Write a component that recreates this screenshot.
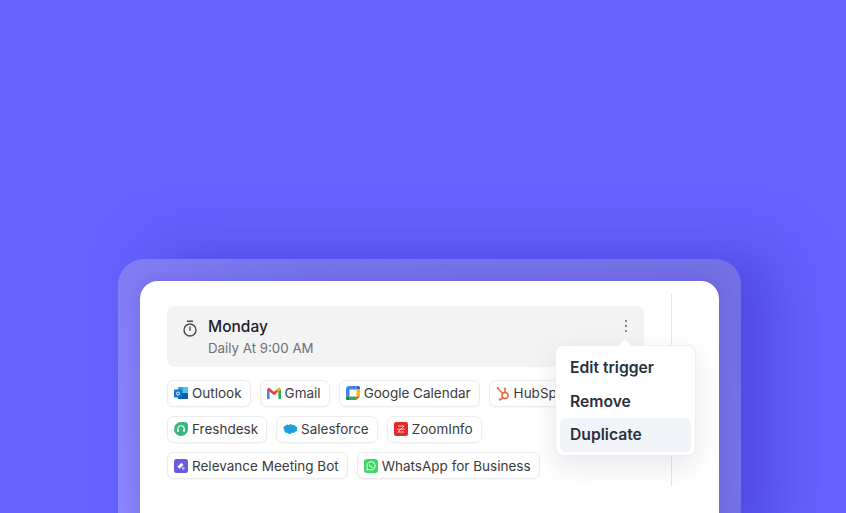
<script>
</script>

<div class="page">
  <div class="shell">
    <div class="card">
      <div class="main">
        <div class="trigger">
          <svg class="timer" viewBox="0 0 16 18" width="16" height="18" fill="none" stroke="#4a4a4a" stroke-width="1.4" stroke-linecap="round">
            <path d="M5.400 1.200h5.200" />
            <circle cx="8" cy="10" r="6" />
            <path d="M8 7v3.200" />
          </svg>
          <div class="titles">
            <div class="title">Monday</div>
            <div class="sub">Daily At 9:00 AM</div>
          </div>
          <svg class="dots" viewBox="0 0 4 14" width="4" height="14" fill="#555">
            <circle cx="2" cy="2" r=".9" /><circle cx="2" cy="7" r=".9" /><circle cx="2" cy="12" r=".9" />
          </svg>
        </div>
        <div class="chips">
          <div class="chip">
            <svg viewBox="0 0 14 14" width="14" height="14">
              <rect x="4" y="1" width="10" height="12" rx="1" fill="#28a8ea" />
              <rect x="9" y="1" width="5" height="6" rx=".6" fill="#4fc3f7" />
              <rect x="4" y="7" width="10" height="6" rx="1" fill="#0a5ea8" />
              <rect x="0" y="3.500" width="8" height="8" rx="1" fill="#1477d0" />
              <circle cx="4" cy="7.500" r="1.500" fill="none" stroke="#fff" stroke-width=".9" />
            </svg>Outlook
          </div>
          <div class="chip">
            <svg viewBox="0 0 14 12" width="14" height="12" fill="none">
              <path d="M1.300 12V2.500" stroke="#4285f4" stroke-width="2.600" />
              <path d="M12.700 12V2.500" stroke="#34a853" stroke-width="2.600" />
              <path d="M1 1.500 7 6.500l6-5" stroke="#ea4335" stroke-width="2.600" />
              <path d="M13 1.500 10.300 3.800" stroke="#fbbc04" stroke-width="2.600" />
            </svg>Gmail
          </div>
          <div class="chip">
            <svg viewBox="0 0 14 14" width="14" height="14" fill="none">
              <path d="M3.500 0H10.500V3.500H3.500V10.500H0V3.500A3.500 3.500 0 0 1 3.500 0z" fill="#3f7ff0" />
              <path d="M10.500 0H12.500A1.500 1.500 0 0 1 14 1.500V3.500H10.500z" fill="#2a62d4" />
              <path d="M10.500 3.500H14V10.500H10.500z" fill="#fbbc04" />
              <path d="M3.500 10.500H10.500V14H3.500z" fill="#34a853" />
              <path d="M0 10.500H3.500V14H1.500A1.500 1.500 0 0 1 0 12.500z" fill="#188038" />
              <path d="M10.500 10.500H14L10.500 14z" fill="#ea4335" />
            </svg>Google Calendar
          </div>
          <div class="chip">
            <svg viewBox="0 0 14 15" width="14" height="15" fill="none" stroke="#f0643c" stroke-width="1.500" stroke-linecap="round">
              <circle cx="9" cy="9.600" r="3" />
              <path d="M9 6.600V3.400M6.700 7.600 2.400 3M6.800 11.600l-2.400 2" />
              <circle cx="9" cy="2.600" r="1" fill="#f0643c" stroke="none" />
              <circle cx="1.800" cy="2.200" r="1.100" fill="#f0643c" stroke="none" />
              <circle cx="3.800" cy="13.600" r="1" fill="#f0643c" stroke="none" />
            </svg>HubSpot
          </div>
          <div class="chip">
            <svg viewBox="0 0 14 14" width="14" height="14" fill="none">
              <path d="M7 0h3.500A3.500 3.500 0 0 1 14 3.500V7a7 7 0 0 1-7 7 7 7 0 0 1-7-7 7 7 0 0 1 7-7z" fill="#3bb87f" />
              <path d="M3.800 8.400V7a3.200 3.200 0 0 1 6.400 0v1.400" stroke="#fff" stroke-width="1.100" />
              <rect x="3.200" y="7.200" width="1.600" height="2.600" rx=".6" fill="#fff" />
              <rect x="9.200" y="7.200" width="1.600" height="2.600" rx=".6" fill="#fff" />
            </svg>Freshdesk
          </div>
          <div class="chip">
            <svg viewBox="0 0 14 10" width="14" height="10">
              <path d="M5.800 1.200A2.500 2.500 0 0 1 9.700 1a3 3 0 0 1 3 1.200A2.900 2.900 0 0 1 12 7.800a2.200 2.200 0 0 1-3 .8 2.500 2.500 0 0 1-4.500.1A2.200 2.200 0 0 1 1.500 6 2.400 2.400 0 0 1 2.500 1.700a2.300 2.300 0 0 1 3.300-.5z" fill="#1ea1db" />
            </svg>Salesforce
          </div>
          <div class="chip">
            <svg viewBox="0 0 14 14" width="14" height="14" fill="none">
              <rect width="14" height="14" rx="2" fill="#e32b2b" />
              <path d="M4 4h6L4 10h6M3 7.200h8" stroke="#fff" stroke-width=".9" opacity=".85" />
            </svg>ZoomInfo
          </div>
          <div class="chip">
            <svg viewBox="0 0 14 14" width="14" height="14">
              <rect width="14" height="14" rx="2.500" fill="#6a5ae0" />
              <path d="M3.500 7.500 7.500 3.800 9.500 6 5.500 9.800z" fill="#fff" />
              <path d="M8 8.200h2.500v2.300H8z" fill="#c9c2f7" />
            </svg>Relevance Meeting Bot
          </div>
          <div class="chip">
            <svg viewBox="0 0 14 14" width="14" height="14" fill="none">
              <rect width="14" height="14" rx="3" fill="#3ed768" />
              <path d="M2.800 11.200l.7-2.400A4.100 4.100 0 1 1 5.200 10.500z" stroke="#fff" stroke-width="1" />
              <path d="M5.400 4.900c-.7.900 0 2 .9 2.900s2 1.400 2.700.8l-.8-1-.7.3-1.300-1.300.3-.7z" fill="#fff" />
            </svg>WhatsApp for Business
          </div>
        </div>
      </div>
      <div class="side"></div>
      <div class="menu">
        <div class="arrow"></div>
        <div class="item">Edit trigger</div>
        <div class="item">Remove</div>
        <div class="item active">Duplicate</div>
      </div>
    </div>
  </div>
</div>

<style>
  :global(body) {
    margin: 0;
    background: #6563ff;
  }
  .page {
    box-sizing: border-box;
    width: 846px;
    height: 513px;
    overflow: hidden;
    padding: 259px 0 0 118px;
    font-family: Inter, "Liberation Sans", sans-serif;
  }
  .shell {
    box-sizing: border-box;
    width: 623px;
    height: 300px;
    padding: 22px;
    border-radius: 26px;
    background: linear-gradient(60deg, #8a86ff 0%, #7773ea 45%, #736fe4 100%);
    box-shadow: 35px -8px 55px rgba(60, 50, 200, 0.5);
  }
  .card {
    position: relative;
    display: flex;
    height: 300px;
    background: #fff;
    border-radius: 18px;
    padding: 13px 0 0 27px;
    box-shadow: 0 -2px 16px rgba(70, 60, 190, 0.22);
  }
  .main {
    width: 477px;
    padding-top: 12px;
  }
  .trigger {
    box-sizing: border-box;
    display: flex;
    align-items: flex-start;
    height: 60.500px;
    background: #f3f3f4;
    border-radius: 8px;
    padding: 11px 15px 0 15px;
  }
  .timer {
    margin: 3px 10px 0 0;
    flex: none;
  }
  .titles {
    flex: 1;
  }
  .title {
    font-size: 15.500px;
    line-height: 20px;
    font-weight: 500;
    color: #202026;
  }
  .sub {
    margin-top: 3px;
    font-size: 13.300px;
    line-height: 17px;
    color: #707074;
  }
  .dots {
    margin: 2px 1px 0 0;
  }
  .chips {
    display: flex;
    flex-wrap: wrap;
    gap: 9.250px 9px;
    margin-top: 13px;
  }
  .chip {
    box-sizing: border-box;
    display: flex;
    align-items: center;
    gap: 4px;
    height: 27px;
    padding: 0 8px 0 6px;
    border: 1px solid #ececef;
    border-radius: 7px;
    background: #fff;
    box-shadow: 0 1px 2px rgba(20, 20, 40, 0.04);
    font-size: 13.500px;
    color: #3a3a40;
    white-space: nowrap;
  }
  .chip svg {
    flex: none;
  }
  .side {
    width: 1px;
    height: 192px;
    margin-left: 27px;
    background: #e6e6e9;
  }
  .menu {
    position: absolute;
    left: 415px;
    top: 64px;
    box-sizing: border-box;
    width: 141px;
    height: 111px;
    padding: 5px 4px;
    background: #fff;
    border: 1px solid #eceef1;
    border-radius: 8px;
    box-shadow: 0 10px 28px rgba(30, 30, 60, 0.10);
  }
  .arrow {
    position: absolute;
    left: 65px;
    top: -5px;
    width: 8px;
    height: 8px;
    background: #fff;
    transform: rotate(45deg);
  }
  .item {
    position: relative;
    height: 33.500px;
    line-height: 33.500px;
    padding: 0 10px;
    border-radius: 6px;
    font-size: 15.700px;
    font-weight: 600;
    color: #2b3040;
  }
  .active {
    background: #f1f5f9;
  }
</style>
